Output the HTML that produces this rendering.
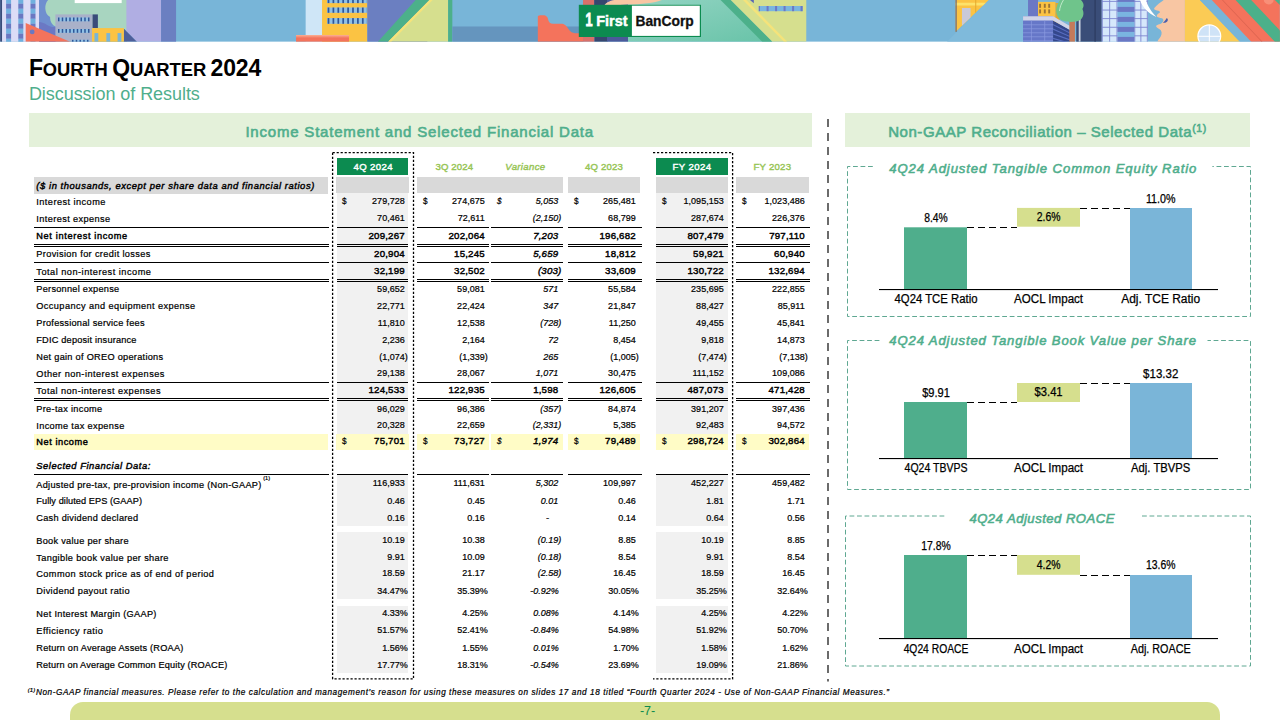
<!DOCTYPE html>
<html lang="en"><head><meta charset="utf-8"><title>Fourth Quarter 2024 - Discussion of Results</title>
<style>
*{margin:0;padding:0;box-sizing:border-box}
html,body{width:1280px;height:720px;overflow:hidden;background:#fff}
body{position:relative;font-family:"Liberation Sans", "DejaVu Sans", sans-serif;color:#000}
.abs{position:absolute}
.t{position:absolute;white-space:nowrap;line-height:14px;height:14px;font-size:9.2px;-webkit-text-stroke:0.22px currentColor}
.r{text-align:right}
.c{text-align:center}
.b{font-weight:bold}
.t.b{font-weight:normal;-webkit-text-stroke:0.42px currentColor}
.hb{font-weight:normal;-webkit-text-stroke:0.6px currentColor}
.i{font-style:italic}
.ln{position:absolute;background:#000}
.g1{position:absolute;background:#d9d9d9}
.g2{position:absolute;background:#f1f1f1}
.yl{position:absolute;background:#fffcc6}
</style></head>
<body>
<div id="f1" class="abs b" style="left:28.9px;top:53px;height:30px;line-height:30px;white-space:nowrap;letter-spacing:-0.086px"><span style="font-size:23px">F</span><span style="font-size:18.4px">OURTH</span> <span style="font-size:23px">Q</span><span style="font-size:18.4px">UARTER</span> <span style="font-size:23px">2024</span></div>
<div id="f2" class="abs" style="left:28.9px;top:81.7px;height:24px;line-height:24px;font-size:18px;color:#4fae8c;white-space:nowrap;letter-spacing:-0.054px">Discussion of Results</div>
<div class="abs" style="left:29px;top:113px;width:783px;height:33.7px;background:#e4f1da"></div>
<div id="f3" class="abs hb" style="left:245.4px;top:113px;height:33.7px;line-height:37.9px;font-size:15px;color:#4fae8c;white-space:nowrap;letter-spacing:0.797px">Income Statement and Selected Financial Data</div>
<div class="abs" style="left:844.5px;top:113px;width:405.5px;height:33.7px;background:#e4f1da"></div>
<div id="f4" class="abs hb" style="left:888.2px;top:113px;height:33.7px;line-height:37.9px;font-size:15px;color:#4fae8c;white-space:nowrap;letter-spacing:0.555px">Non-GAAP Reconciliation &ndash; Selected Data<span style="font-size:10.5px;position:relative;top:-5px">(1)</span></div>
<div class="abs" style="left:337px;top:158.2px;width:71px;height:16.4px;background:#0c8b50"></div>
<div id="f5" class="t b" style="left:353.5px;top:160.0px;color:#fff;font-size:9.6px;letter-spacing:0.365px">4Q 2024</div>
<div id="f6" class="t b" style="left:435.4px;top:160.0px;color:#97c556;font-size:9.6px;letter-spacing:0.165px">3Q 2024</div>
<div id="f7" class="t b i" style="left:505.3px;top:160.0px;color:#97c556;font-size:9.6px;letter-spacing:0.326px">Variance</div>
<div id="f8" class="t b" style="left:585.1px;top:160.0px;color:#97c556;font-size:9.6px;letter-spacing:0.165px">4Q 2023</div>
<div class="abs" style="left:656px;top:158.2px;width:72px;height:16.4px;background:#0c8b50"></div>
<div id="f9" class="t b" style="left:672.6px;top:160.0px;color:#fff;font-size:9.6px;letter-spacing:0.384px">FY 2024</div>
<div id="f10" class="t b" style="left:753.5px;top:160.0px;color:#97c556;font-size:9.6px;letter-spacing:0.234px">FY 2023</div>
<div class="g1" style="left:34.4px;top:177.1px;width:293.6px;height:16.65px"></div>
<div class="g1" style="left:336px;top:177.1px;width:73px;height:15.5px"></div>
<div class="g1" style="left:417px;top:177.1px;width:145.5px;height:15.5px"></div>
<div class="g1" style="left:568px;top:177.1px;width:72px;height:15.5px"></div>
<div class="g1" style="left:656px;top:177.1px;width:72px;height:15.5px"></div>
<div class="g1" style="left:736px;top:177.1px;width:73px;height:15.5px"></div>
<div id="f11" class="t b i" style="left:36.3px;top:178.8px;font-size:9.4px;letter-spacing:0.578px">($ in thousands, except per share data and financial ratios)</div>
<div class="g2" style="left:337px;top:192.6px;width:71px;height:241.4px"></div>
<div class="g2" style="left:337px;top:474.7px;width:71px;height:51.00000000000006px"></div>
<div class="g2" style="left:337px;top:532px;width:71px;height:66.79999999999995px"></div>
<div class="g2" style="left:337px;top:606px;width:71px;height:66.79999999999995px"></div>
<div class="g2" style="left:656px;top:192.6px;width:72px;height:241.4px"></div>
<div class="g2" style="left:656px;top:474.7px;width:72px;height:51.00000000000006px"></div>
<div class="g2" style="left:656px;top:532px;width:72px;height:66.79999999999995px"></div>
<div class="g2" style="left:656px;top:606px;width:72px;height:66.79999999999995px"></div>
<div class="yl" style="left:34.4px;top:434.2px;width:293.6px;height:15.600000000000023px"></div>
<div class="yl" style="left:336px;top:434.2px;width:73px;height:15.600000000000023px"></div>
<div class="yl" style="left:417px;top:434.2px;width:72px;height:15.600000000000023px"></div>
<div class="yl" style="left:491px;top:434.2px;width:71.5px;height:15.600000000000023px"></div>
<div class="yl" style="left:568px;top:434.2px;width:72px;height:15.600000000000023px"></div>
<div class="yl" style="left:656px;top:434.2px;width:72px;height:15.600000000000023px"></div>
<div class="yl" style="left:736px;top:434.2px;width:73px;height:15.600000000000023px"></div>
<div id="f12" class="t" style="left:36.3px;top:194.7px;letter-spacing:0.449px">Interest income</div>
<div class="t r" style="left:326px;top:194.4px;width:78.70px;font-size:9.7px;transform:scaleX(.93);transform-origin:100% 50%">279,728</div>
<div class="t" style="left:342.3px;top:194.39999999999998px;font-size:9.7px;transform:scaleX(.85);transform-origin:0 50%">$</div>
<div class="t r" style="left:407px;top:194.4px;width:77.70px;font-size:9.7px;transform:scaleX(.93);transform-origin:100% 50%">274,675</div>
<div class="t" style="left:423.3px;top:194.39999999999998px;font-size:9.7px;transform:scaleX(.85);transform-origin:0 50%">$</div>
<div class="t r i" style="left:481px;top:194.4px;width:77.20px;font-size:9.7px;transform:scaleX(.93);transform-origin:100% 50%">5,053</div>
<div class="t i" style="left:497.3px;top:194.39999999999998px;font-size:9.7px;transform:scaleX(.85);transform-origin:0 50%">$</div>
<div class="t r" style="left:558px;top:194.4px;width:77.70px;font-size:9.7px;transform:scaleX(.93);transform-origin:100% 50%">265,481</div>
<div class="t" style="left:574.3px;top:194.39999999999998px;font-size:9.7px;transform:scaleX(.85);transform-origin:0 50%">$</div>
<div class="t r" style="left:646px;top:194.4px;width:77.70px;font-size:9.7px;transform:scaleX(.93);transform-origin:100% 50%">1,095,153</div>
<div class="t" style="left:662.3px;top:194.39999999999998px;font-size:9.7px;transform:scaleX(.85);transform-origin:0 50%">$</div>
<div class="t r" style="left:726px;top:194.4px;width:78.70px;font-size:9.7px;transform:scaleX(.93);transform-origin:100% 50%">1,023,486</div>
<div class="t" style="left:742.3px;top:194.39999999999998px;font-size:9.7px;transform:scaleX(.85);transform-origin:0 50%">$</div>
<div id="f13" class="t" style="left:36.3px;top:211.5px;letter-spacing:0.397px">Interest expense</div>
<div class="t r" style="left:326px;top:211.2px;width:78.70px;font-size:9.7px;transform:scaleX(.93);transform-origin:100% 50%">70,461</div>
<div class="t r" style="left:407px;top:211.2px;width:77.70px;font-size:9.7px;transform:scaleX(.93);transform-origin:100% 50%">72,611</div>
<div class="t r i" style="left:481px;top:211.2px;width:80.30px;font-size:9.7px;transform:scaleX(.93);transform-origin:100% 50%">(2,150)</div>
<div class="t r" style="left:558px;top:211.2px;width:77.70px;font-size:9.7px;transform:scaleX(.93);transform-origin:100% 50%">68,799</div>
<div class="t r" style="left:646px;top:211.2px;width:77.70px;font-size:9.7px;transform:scaleX(.93);transform-origin:100% 50%">287,674</div>
<div class="t r" style="left:726px;top:211.2px;width:78.70px;font-size:9.7px;transform:scaleX(.93);transform-origin:100% 50%">226,376</div>
<div id="f14" class="t b" style="left:36.3px;top:229.4px;letter-spacing:0.652px">Net interest income</div>
<div class="t r b" style="left:326px;top:229.1px;width:78.90px;font-size:9.7px;letter-spacing:0.2px">209,267</div>
<div class="t r b" style="left:407px;top:229.1px;width:77.90px;font-size:9.7px;letter-spacing:0.2px">202,064</div>
<div class="t r b i" style="left:481px;top:229.1px;width:77.40px;font-size:9.7px;letter-spacing:0.2px">7,203</div>
<div class="t r b" style="left:558px;top:229.1px;width:77.90px;font-size:9.7px;letter-spacing:0.2px">196,682</div>
<div class="t r b" style="left:646px;top:229.1px;width:77.90px;font-size:9.7px;letter-spacing:0.2px">807,479</div>
<div class="t r b" style="left:726px;top:229.1px;width:78.90px;font-size:9.7px;letter-spacing:0.2px">797,110</div>
<div id="f15" class="t" style="left:36.3px;top:246.8px;letter-spacing:0.358px">Provision for credit losses</div>
<div class="t r b" style="left:326px;top:246.5px;width:78.90px;font-size:9.7px;letter-spacing:0.2px">20,904</div>
<div class="t r b" style="left:407px;top:246.5px;width:77.90px;font-size:9.7px;letter-spacing:0.2px">15,245</div>
<div class="t r b i" style="left:481px;top:246.5px;width:77.40px;font-size:9.7px;letter-spacing:0.2px">5,659</div>
<div class="t r b" style="left:558px;top:246.5px;width:77.90px;font-size:9.7px;letter-spacing:0.2px">18,812</div>
<div class="t r b" style="left:646px;top:246.5px;width:77.90px;font-size:9.7px;letter-spacing:0.2px">59,921</div>
<div class="t r b" style="left:726px;top:246.5px;width:78.90px;font-size:9.7px;letter-spacing:0.2px">60,940</div>
<div id="f16" class="t" style="left:36.3px;top:264.6px;letter-spacing:0.498px">Total non-interest income</div>
<div class="t r b" style="left:326px;top:264.3px;width:78.90px;font-size:9.7px;letter-spacing:0.2px">32,199</div>
<div class="t r b" style="left:407px;top:264.3px;width:77.90px;font-size:9.7px;letter-spacing:0.2px">32,502</div>
<div class="t r b i" style="left:481px;top:264.3px;width:80.50px;font-size:9.7px;letter-spacing:0.2px">(303)</div>
<div class="t r b" style="left:558px;top:264.3px;width:77.90px;font-size:9.7px;letter-spacing:0.2px">33,609</div>
<div class="t r b" style="left:646px;top:264.3px;width:77.90px;font-size:9.7px;letter-spacing:0.2px">130,722</div>
<div class="t r b" style="left:726px;top:264.3px;width:78.90px;font-size:9.7px;letter-spacing:0.2px">132,694</div>
<div id="f17" class="t" style="left:36.3px;top:282.3px;letter-spacing:0.264px">Personnel expense</div>
<div class="t r" style="left:326px;top:282.0px;width:78.70px;font-size:9.7px;transform:scaleX(.93);transform-origin:100% 50%">59,652</div>
<div class="t r" style="left:407px;top:282.0px;width:77.70px;font-size:9.7px;transform:scaleX(.93);transform-origin:100% 50%">59,081</div>
<div class="t r i" style="left:481px;top:282.0px;width:77.20px;font-size:9.7px;transform:scaleX(.93);transform-origin:100% 50%">571</div>
<div class="t r" style="left:558px;top:282.0px;width:77.70px;font-size:9.7px;transform:scaleX(.93);transform-origin:100% 50%">55,584</div>
<div class="t r" style="left:646px;top:282.0px;width:77.70px;font-size:9.7px;transform:scaleX(.93);transform-origin:100% 50%">235,695</div>
<div class="t r" style="left:726px;top:282.0px;width:78.70px;font-size:9.7px;transform:scaleX(.93);transform-origin:100% 50%">222,855</div>
<div id="f18" class="t" style="left:36.3px;top:298.8px;letter-spacing:0.407px">Occupancy and equipment expense</div>
<div class="t r" style="left:326px;top:298.5px;width:78.70px;font-size:9.7px;transform:scaleX(.93);transform-origin:100% 50%">22,771</div>
<div class="t r" style="left:407px;top:298.5px;width:77.70px;font-size:9.7px;transform:scaleX(.93);transform-origin:100% 50%">22,424</div>
<div class="t r i" style="left:481px;top:298.5px;width:77.20px;font-size:9.7px;transform:scaleX(.93);transform-origin:100% 50%">347</div>
<div class="t r" style="left:558px;top:298.5px;width:77.70px;font-size:9.7px;transform:scaleX(.93);transform-origin:100% 50%">21,847</div>
<div class="t r" style="left:646px;top:298.5px;width:77.70px;font-size:9.7px;transform:scaleX(.93);transform-origin:100% 50%">88,427</div>
<div class="t r" style="left:726px;top:298.5px;width:78.70px;font-size:9.7px;transform:scaleX(.93);transform-origin:100% 50%">85,911</div>
<div id="f19" class="t" style="left:36.3px;top:316.0px;letter-spacing:0.252px">Professional service fees</div>
<div class="t r" style="left:326px;top:315.7px;width:78.70px;font-size:9.7px;transform:scaleX(.93);transform-origin:100% 50%">11,810</div>
<div class="t r" style="left:407px;top:315.7px;width:77.70px;font-size:9.7px;transform:scaleX(.93);transform-origin:100% 50%">12,538</div>
<div class="t r i" style="left:481px;top:315.7px;width:80.30px;font-size:9.7px;transform:scaleX(.93);transform-origin:100% 50%">(728)</div>
<div class="t r" style="left:558px;top:315.7px;width:77.70px;font-size:9.7px;transform:scaleX(.93);transform-origin:100% 50%">11,250</div>
<div class="t r" style="left:646px;top:315.7px;width:77.70px;font-size:9.7px;transform:scaleX(.93);transform-origin:100% 50%">49,455</div>
<div class="t r" style="left:726px;top:315.7px;width:78.70px;font-size:9.7px;transform:scaleX(.93);transform-origin:100% 50%">45,841</div>
<div id="f20" class="t" style="left:36.3px;top:332.8px;letter-spacing:0.199px">FDIC deposit insurance</div>
<div class="t r" style="left:326px;top:332.5px;width:78.70px;font-size:9.7px;transform:scaleX(.93);transform-origin:100% 50%">2,236</div>
<div class="t r" style="left:407px;top:332.5px;width:77.70px;font-size:9.7px;transform:scaleX(.93);transform-origin:100% 50%">2,164</div>
<div class="t r i" style="left:481px;top:332.5px;width:77.20px;font-size:9.7px;transform:scaleX(.93);transform-origin:100% 50%">72</div>
<div class="t r" style="left:558px;top:332.5px;width:77.70px;font-size:9.7px;transform:scaleX(.93);transform-origin:100% 50%">8,454</div>
<div class="t r" style="left:646px;top:332.5px;width:77.70px;font-size:9.7px;transform:scaleX(.93);transform-origin:100% 50%">9,818</div>
<div class="t r" style="left:726px;top:332.5px;width:78.70px;font-size:9.7px;transform:scaleX(.93);transform-origin:100% 50%">14,873</div>
<div id="f21" class="t" style="left:36.3px;top:350.0px;letter-spacing:0.280px">Net gain of OREO operations</div>
<div class="t r" style="left:326px;top:349.7px;width:81.80px;font-size:9.7px;transform:scaleX(.93);transform-origin:100% 50%">(1,074)</div>
<div class="t r" style="left:407px;top:349.7px;width:80.80px;font-size:9.7px;transform:scaleX(.93);transform-origin:100% 50%">(1,339)</div>
<div class="t r i" style="left:481px;top:349.7px;width:77.20px;font-size:9.7px;transform:scaleX(.93);transform-origin:100% 50%">265</div>
<div class="t r" style="left:558px;top:349.7px;width:80.80px;font-size:9.7px;transform:scaleX(.93);transform-origin:100% 50%">(1,005)</div>
<div class="t r" style="left:646px;top:349.7px;width:80.80px;font-size:9.7px;transform:scaleX(.93);transform-origin:100% 50%">(7,474)</div>
<div class="t r" style="left:726px;top:349.7px;width:81.80px;font-size:9.7px;transform:scaleX(.93);transform-origin:100% 50%">(7,138)</div>
<div id="f22" class="t" style="left:36.3px;top:366.7px;letter-spacing:0.468px">Other non-interest expenses</div>
<div class="t r" style="left:326px;top:366.4px;width:78.70px;font-size:9.7px;transform:scaleX(.93);transform-origin:100% 50%">29,138</div>
<div class="t r" style="left:407px;top:366.4px;width:77.70px;font-size:9.7px;transform:scaleX(.93);transform-origin:100% 50%">28,067</div>
<div class="t r i" style="left:481px;top:366.4px;width:77.20px;font-size:9.7px;transform:scaleX(.93);transform-origin:100% 50%">1,071</div>
<div class="t r" style="left:558px;top:366.4px;width:77.70px;font-size:9.7px;transform:scaleX(.93);transform-origin:100% 50%">30,475</div>
<div class="t r" style="left:646px;top:366.4px;width:77.70px;font-size:9.7px;transform:scaleX(.93);transform-origin:100% 50%">111,152</div>
<div class="t r" style="left:726px;top:366.4px;width:78.70px;font-size:9.7px;transform:scaleX(.93);transform-origin:100% 50%">109,086</div>
<div id="f23" class="t" style="left:36.3px;top:383.7px;letter-spacing:0.455px">Total non-interest expenses</div>
<div class="t r b" style="left:326px;top:383.4px;width:78.90px;font-size:9.7px;letter-spacing:0.2px">124,533</div>
<div class="t r b" style="left:407px;top:383.4px;width:77.90px;font-size:9.7px;letter-spacing:0.2px">122,935</div>
<div class="t r b" style="left:481px;top:383.4px;width:77.40px;font-size:9.7px;letter-spacing:0.2px">1,598</div>
<div class="t r b" style="left:558px;top:383.4px;width:77.90px;font-size:9.7px;letter-spacing:0.2px">126,605</div>
<div class="t r b" style="left:646px;top:383.4px;width:77.90px;font-size:9.7px;letter-spacing:0.2px">487,073</div>
<div class="t r b" style="left:726px;top:383.4px;width:78.90px;font-size:9.7px;letter-spacing:0.2px">471,428</div>
<div id="f24" class="t" style="left:36.3px;top:401.8px;letter-spacing:0.316px">Pre-tax income</div>
<div class="t r" style="left:326px;top:401.5px;width:78.70px;font-size:9.7px;transform:scaleX(.93);transform-origin:100% 50%">96,029</div>
<div class="t r" style="left:407px;top:401.5px;width:77.70px;font-size:9.7px;transform:scaleX(.93);transform-origin:100% 50%">96,386</div>
<div class="t r i" style="left:481px;top:401.5px;width:80.30px;font-size:9.7px;transform:scaleX(.93);transform-origin:100% 50%">(357)</div>
<div class="t r" style="left:558px;top:401.5px;width:77.70px;font-size:9.7px;transform:scaleX(.93);transform-origin:100% 50%">84,874</div>
<div class="t r" style="left:646px;top:401.5px;width:77.70px;font-size:9.7px;transform:scaleX(.93);transform-origin:100% 50%">391,207</div>
<div class="t r" style="left:726px;top:401.5px;width:78.70px;font-size:9.7px;transform:scaleX(.93);transform-origin:100% 50%">397,436</div>
<div id="f25" class="t" style="left:36.3px;top:418.6px;letter-spacing:0.339px">Income tax expense</div>
<div class="t r" style="left:326px;top:418.3px;width:78.70px;font-size:9.7px;transform:scaleX(.93);transform-origin:100% 50%">20,328</div>
<div class="t r" style="left:407px;top:418.3px;width:77.70px;font-size:9.7px;transform:scaleX(.93);transform-origin:100% 50%">22,659</div>
<div class="t r i" style="left:481px;top:418.3px;width:80.30px;font-size:9.7px;transform:scaleX(.93);transform-origin:100% 50%">(2,331)</div>
<div class="t r" style="left:558px;top:418.3px;width:77.70px;font-size:9.7px;transform:scaleX(.93);transform-origin:100% 50%">5,385</div>
<div class="t r" style="left:646px;top:418.3px;width:77.70px;font-size:9.7px;transform:scaleX(.93);transform-origin:100% 50%">92,483</div>
<div class="t r" style="left:726px;top:418.3px;width:78.70px;font-size:9.7px;transform:scaleX(.93);transform-origin:100% 50%">94,572</div>
<div id="f26" class="t b" style="left:36.3px;top:434.7px;letter-spacing:0.559px">Net income</div>
<div class="t r b" style="left:326px;top:434.4px;width:78.90px;font-size:9.7px;letter-spacing:0.2px">75,701</div>
<div class="t" style="left:342.3px;top:434.4px;font-size:9.7px;transform:scaleX(.85);transform-origin:0 50%">$</div>
<div class="t r b" style="left:407px;top:434.4px;width:77.90px;font-size:9.7px;letter-spacing:0.2px">73,727</div>
<div class="t" style="left:423.3px;top:434.4px;font-size:9.7px;transform:scaleX(.85);transform-origin:0 50%">$</div>
<div class="t r b i" style="left:481px;top:434.4px;width:77.40px;font-size:9.7px;letter-spacing:0.2px">1,974</div>
<div class="t i" style="left:497.3px;top:434.4px;font-size:9.7px;transform:scaleX(.85);transform-origin:0 50%">$</div>
<div class="t r b" style="left:558px;top:434.4px;width:77.90px;font-size:9.7px;letter-spacing:0.2px">79,489</div>
<div class="t" style="left:574.3px;top:434.4px;font-size:9.7px;transform:scaleX(.85);transform-origin:0 50%">$</div>
<div class="t r b" style="left:646px;top:434.4px;width:77.90px;font-size:9.7px;letter-spacing:0.2px">298,724</div>
<div class="t" style="left:662.3px;top:434.4px;font-size:9.7px;transform:scaleX(.85);transform-origin:0 50%">$</div>
<div class="t r b" style="left:726px;top:434.4px;width:78.90px;font-size:9.7px;letter-spacing:0.2px">302,864</div>
<div class="t" style="left:742.3px;top:434.4px;font-size:9.7px;transform:scaleX(.85);transform-origin:0 50%">$</div>
<div id="f27" class="t" style="left:36.3px;top:478.4px;letter-spacing:0.283px">Adjusted pre-tax, pre-provision income (Non-GAAP)<span style="font-size:5.6px;position:relative;top:-8.6px;left:1.6px;letter-spacing:0">(1)</span></div>
<div class="t r" style="left:326px;top:475.6px;width:78.70px;font-size:9.7px;transform:scaleX(.93);transform-origin:100% 50%">116,933</div>
<div class="t r" style="left:407px;top:475.6px;width:77.70px;font-size:9.7px;transform:scaleX(.93);transform-origin:100% 50%">111,631</div>
<div class="t r i" style="left:481px;top:475.6px;width:77.20px;font-size:9.7px;transform:scaleX(.93);transform-origin:100% 50%">5,302</div>
<div class="t r" style="left:558px;top:475.6px;width:77.70px;font-size:9.7px;transform:scaleX(.93);transform-origin:100% 50%">109,997</div>
<div class="t r" style="left:646px;top:475.6px;width:77.70px;font-size:9.7px;transform:scaleX(.93);transform-origin:100% 50%">452,227</div>
<div class="t r" style="left:726px;top:475.6px;width:78.70px;font-size:9.7px;transform:scaleX(.93);transform-origin:100% 50%">459,482</div>
<div id="f28" class="t" style="left:36.3px;top:493.8px;letter-spacing:0.066px">Fully diluted EPS (GAAP)</div>
<div class="t r" style="left:326px;top:493.5px;width:78.70px;font-size:9.7px;transform:scaleX(.93);transform-origin:100% 50%">0.46</div>
<div class="t r" style="left:407px;top:493.5px;width:77.70px;font-size:9.7px;transform:scaleX(.93);transform-origin:100% 50%">0.45</div>
<div class="t r i" style="left:481px;top:493.5px;width:77.20px;font-size:9.7px;transform:scaleX(.93);transform-origin:100% 50%">0.01</div>
<div class="t r" style="left:558px;top:493.5px;width:77.70px;font-size:9.7px;transform:scaleX(.93);transform-origin:100% 50%">0.46</div>
<div class="t r" style="left:646px;top:493.5px;width:77.70px;font-size:9.7px;transform:scaleX(.93);transform-origin:100% 50%">1.81</div>
<div class="t r" style="left:726px;top:493.5px;width:78.70px;font-size:9.7px;transform:scaleX(.93);transform-origin:100% 50%">1.71</div>
<div id="f29" class="t" style="left:36.3px;top:510.9px;letter-spacing:0.275px">Cash dividend declared</div>
<div class="t r" style="left:326px;top:510.6px;width:78.70px;font-size:9.7px;transform:scaleX(.93);transform-origin:100% 50%">0.16</div>
<div class="t r" style="left:407px;top:510.6px;width:77.70px;font-size:9.7px;transform:scaleX(.93);transform-origin:100% 50%">0.16</div>
<div class="t r i" style="left:481px;top:510.6px;width:68.00px;font-size:9.7px;transform:scaleX(.93);transform-origin:100% 50%">-</div>
<div class="t r" style="left:558px;top:510.6px;width:77.70px;font-size:9.7px;transform:scaleX(.93);transform-origin:100% 50%">0.14</div>
<div class="t r" style="left:646px;top:510.6px;width:77.70px;font-size:9.7px;transform:scaleX(.93);transform-origin:100% 50%">0.64</div>
<div class="t r" style="left:726px;top:510.6px;width:78.70px;font-size:9.7px;transform:scaleX(.93);transform-origin:100% 50%">0.56</div>
<div id="f30" class="t" style="left:36.3px;top:533.5px;letter-spacing:0.283px">Book value per share</div>
<div class="t r" style="left:326px;top:533.2px;width:78.70px;font-size:9.7px;transform:scaleX(.93);transform-origin:100% 50%">10.19</div>
<div class="t r" style="left:407px;top:533.2px;width:77.70px;font-size:9.7px;transform:scaleX(.93);transform-origin:100% 50%">10.38</div>
<div class="t r i" style="left:481px;top:533.2px;width:80.30px;font-size:9.7px;transform:scaleX(.93);transform-origin:100% 50%">(0.19)</div>
<div class="t r" style="left:558px;top:533.2px;width:77.70px;font-size:9.7px;transform:scaleX(.93);transform-origin:100% 50%">8.85</div>
<div class="t r" style="left:646px;top:533.2px;width:77.70px;font-size:9.7px;transform:scaleX(.93);transform-origin:100% 50%">10.19</div>
<div class="t r" style="left:726px;top:533.2px;width:78.70px;font-size:9.7px;transform:scaleX(.93);transform-origin:100% 50%">8.85</div>
<div id="f31" class="t" style="left:36.3px;top:550.5px;letter-spacing:0.343px">Tangible book value per share</div>
<div class="t r" style="left:326px;top:550.2px;width:78.70px;font-size:9.7px;transform:scaleX(.93);transform-origin:100% 50%">9.91</div>
<div class="t r" style="left:407px;top:550.2px;width:77.70px;font-size:9.7px;transform:scaleX(.93);transform-origin:100% 50%">10.09</div>
<div class="t r i" style="left:481px;top:550.2px;width:80.30px;font-size:9.7px;transform:scaleX(.93);transform-origin:100% 50%">(0.18)</div>
<div class="t r" style="left:558px;top:550.2px;width:77.70px;font-size:9.7px;transform:scaleX(.93);transform-origin:100% 50%">8.54</div>
<div class="t r" style="left:646px;top:550.2px;width:77.70px;font-size:9.7px;transform:scaleX(.93);transform-origin:100% 50%">9.91</div>
<div class="t r" style="left:726px;top:550.2px;width:78.70px;font-size:9.7px;transform:scaleX(.93);transform-origin:100% 50%">8.54</div>
<div id="f32" class="t" style="left:36.3px;top:566.6px;letter-spacing:0.413px">Common stock price as of end of period</div>
<div class="t r" style="left:326px;top:566.3px;width:78.70px;font-size:9.7px;transform:scaleX(.93);transform-origin:100% 50%">18.59</div>
<div class="t r" style="left:407px;top:566.3px;width:77.70px;font-size:9.7px;transform:scaleX(.93);transform-origin:100% 50%">21.17</div>
<div class="t r i" style="left:481px;top:566.3px;width:80.30px;font-size:9.7px;transform:scaleX(.93);transform-origin:100% 50%">(2.58)</div>
<div class="t r" style="left:558px;top:566.3px;width:77.70px;font-size:9.7px;transform:scaleX(.93);transform-origin:100% 50%">16.45</div>
<div class="t r" style="left:646px;top:566.3px;width:77.70px;font-size:9.7px;transform:scaleX(.93);transform-origin:100% 50%">18.59</div>
<div class="t r" style="left:726px;top:566.3px;width:78.70px;font-size:9.7px;transform:scaleX(.93);transform-origin:100% 50%">16.45</div>
<div id="f33" class="t" style="left:36.3px;top:584.0px;letter-spacing:0.344px">Dividend payout ratio</div>
<div class="t r" style="left:326px;top:583.7px;width:81.80px;font-size:9.7px;transform:scaleX(.93);transform-origin:100% 50%">34.47%</div>
<div class="t r" style="left:407px;top:583.7px;width:80.80px;font-size:9.7px;transform:scaleX(.93);transform-origin:100% 50%">35.39%</div>
<div class="t r i" style="left:481px;top:583.7px;width:77.70px;font-size:9.7px;transform:scaleX(.93);transform-origin:100% 50%">-0.92%</div>
<div class="t r" style="left:558px;top:583.7px;width:80.80px;font-size:9.7px;transform:scaleX(.93);transform-origin:100% 50%">30.05%</div>
<div class="t r" style="left:646px;top:583.7px;width:80.80px;font-size:9.7px;transform:scaleX(.93);transform-origin:100% 50%">35.25%</div>
<div class="t r" style="left:726px;top:583.7px;width:81.80px;font-size:9.7px;transform:scaleX(.93);transform-origin:100% 50%">32.64%</div>
<div id="f34" class="t" style="left:36.3px;top:606.6px;letter-spacing:0.311px">Net Interest Margin (GAAP)</div>
<div class="t r" style="left:326px;top:606.3px;width:81.80px;font-size:9.7px;transform:scaleX(.93);transform-origin:100% 50%">4.33%</div>
<div class="t r" style="left:407px;top:606.3px;width:80.80px;font-size:9.7px;transform:scaleX(.93);transform-origin:100% 50%">4.25%</div>
<div class="t r i" style="left:481px;top:606.3px;width:77.70px;font-size:9.7px;transform:scaleX(.93);transform-origin:100% 50%">0.08%</div>
<div class="t r" style="left:558px;top:606.3px;width:80.80px;font-size:9.7px;transform:scaleX(.93);transform-origin:100% 50%">4.14%</div>
<div class="t r" style="left:646px;top:606.3px;width:80.80px;font-size:9.7px;transform:scaleX(.93);transform-origin:100% 50%">4.25%</div>
<div class="t r" style="left:726px;top:606.3px;width:81.80px;font-size:9.7px;transform:scaleX(.93);transform-origin:100% 50%">4.22%</div>
<div id="f35" class="t" style="left:36.3px;top:623.7px;letter-spacing:0.468px">Efficiency ratio</div>
<div class="t r" style="left:326px;top:623.4px;width:81.80px;font-size:9.7px;transform:scaleX(.93);transform-origin:100% 50%">51.57%</div>
<div class="t r" style="left:407px;top:623.4px;width:80.80px;font-size:9.7px;transform:scaleX(.93);transform-origin:100% 50%">52.41%</div>
<div class="t r i" style="left:481px;top:623.4px;width:77.70px;font-size:9.7px;transform:scaleX(.93);transform-origin:100% 50%">-0.84%</div>
<div class="t r" style="left:558px;top:623.4px;width:80.80px;font-size:9.7px;transform:scaleX(.93);transform-origin:100% 50%">54.98%</div>
<div class="t r" style="left:646px;top:623.4px;width:80.80px;font-size:9.7px;transform:scaleX(.93);transform-origin:100% 50%">51.92%</div>
<div class="t r" style="left:726px;top:623.4px;width:81.80px;font-size:9.7px;transform:scaleX(.93);transform-origin:100% 50%">50.70%</div>
<div id="f36" class="t" style="left:36.3px;top:640.9px;letter-spacing:0.207px">Return on Average Assets (ROAA)</div>
<div class="t r" style="left:326px;top:640.6px;width:81.80px;font-size:9.7px;transform:scaleX(.93);transform-origin:100% 50%">1.56%</div>
<div class="t r" style="left:407px;top:640.6px;width:80.80px;font-size:9.7px;transform:scaleX(.93);transform-origin:100% 50%">1.55%</div>
<div class="t r i" style="left:481px;top:640.6px;width:77.70px;font-size:9.7px;transform:scaleX(.93);transform-origin:100% 50%">0.01%</div>
<div class="t r" style="left:558px;top:640.6px;width:80.80px;font-size:9.7px;transform:scaleX(.93);transform-origin:100% 50%">1.70%</div>
<div class="t r" style="left:646px;top:640.6px;width:80.80px;font-size:9.7px;transform:scaleX(.93);transform-origin:100% 50%">1.58%</div>
<div class="t r" style="left:726px;top:640.6px;width:81.80px;font-size:9.7px;transform:scaleX(.93);transform-origin:100% 50%">1.62%</div>
<div id="f37" class="t" style="left:36.3px;top:658.0px;letter-spacing:0.137px">Return on Average Common Equity (ROACE)</div>
<div class="t r" style="left:326px;top:657.7px;width:81.80px;font-size:9.7px;transform:scaleX(.93);transform-origin:100% 50%">17.77%</div>
<div class="t r" style="left:407px;top:657.7px;width:80.80px;font-size:9.7px;transform:scaleX(.93);transform-origin:100% 50%">18.31%</div>
<div class="t r i" style="left:481px;top:657.7px;width:77.70px;font-size:9.7px;transform:scaleX(.93);transform-origin:100% 50%">-0.54%</div>
<div class="t r" style="left:558px;top:657.7px;width:80.80px;font-size:9.7px;transform:scaleX(.93);transform-origin:100% 50%">23.69%</div>
<div class="t r" style="left:646px;top:657.7px;width:80.80px;font-size:9.7px;transform:scaleX(.93);transform-origin:100% 50%">19.09%</div>
<div class="t r" style="left:726px;top:657.7px;width:81.80px;font-size:9.7px;transform:scaleX(.93);transform-origin:100% 50%">21.86%</div>
<div id="f38" class="t b i" style="left:36.3px;top:459.3px;font-size:9.4px;letter-spacing:0.538px">Selected Financial Data:</div>
<div class="ln" style="left:34.4px;top:227px;width:294.8px;height:1.15px"></div>
<div class="ln" style="left:337px;top:227px;width:71px;height:1.15px"></div>
<div class="ln" style="left:417px;top:227px;width:72px;height:1.15px"></div>
<div class="ln" style="left:491px;top:227px;width:71.5px;height:1.15px"></div>
<div class="ln" style="left:568px;top:227px;width:73.5px;height:1.15px"></div>
<div class="ln" style="left:656px;top:227px;width:72px;height:1.15px"></div>
<div class="ln" style="left:736px;top:227px;width:73.5px;height:1.15px"></div>
<div class="ln" style="left:34.4px;top:262px;width:294.8px;height:1.15px"></div>
<div class="ln" style="left:337px;top:262px;width:71px;height:1.15px"></div>
<div class="ln" style="left:417px;top:262px;width:72px;height:1.15px"></div>
<div class="ln" style="left:491px;top:262px;width:71.5px;height:1.15px"></div>
<div class="ln" style="left:568px;top:262px;width:73.5px;height:1.15px"></div>
<div class="ln" style="left:656px;top:262px;width:72px;height:1.15px"></div>
<div class="ln" style="left:736px;top:262px;width:73.5px;height:1.15px"></div>
<div class="ln" style="left:34.4px;top:382px;width:294.8px;height:1.15px"></div>
<div class="ln" style="left:337px;top:382px;width:71px;height:1.15px"></div>
<div class="ln" style="left:417px;top:382px;width:72px;height:1.15px"></div>
<div class="ln" style="left:491px;top:382px;width:71.5px;height:1.15px"></div>
<div class="ln" style="left:568px;top:382px;width:73.5px;height:1.15px"></div>
<div class="ln" style="left:656px;top:382px;width:72px;height:1.15px"></div>
<div class="ln" style="left:736px;top:382px;width:73.5px;height:1.15px"></div>
<div class="ln" style="left:34.4px;top:474px;width:294.8px;height:1.15px"></div>
<div class="ln" style="left:337px;top:474px;width:71px;height:1.15px"></div>
<div class="ln" style="left:417px;top:474px;width:72px;height:1.15px"></div>
<div class="ln" style="left:491px;top:474px;width:71.5px;height:1.15px"></div>
<div class="ln" style="left:568px;top:474px;width:73.5px;height:1.15px"></div>
<div class="ln" style="left:656px;top:474px;width:72px;height:1.15px"></div>
<div class="ln" style="left:736px;top:474px;width:73.5px;height:1.15px"></div>
<div class="ln" style="left:34.4px;top:244px;width:294.8px;height:1px"></div>
<div class="ln" style="left:337px;top:244px;width:71px;height:1px"></div>
<div class="ln" style="left:417px;top:244px;width:72px;height:1px"></div>
<div class="ln" style="left:491px;top:244px;width:71.5px;height:1px"></div>
<div class="ln" style="left:568px;top:244px;width:73.5px;height:1px"></div>
<div class="ln" style="left:656px;top:244px;width:72px;height:1px"></div>
<div class="ln" style="left:736px;top:244px;width:73.5px;height:1px"></div>
<div class="ln" style="left:34.4px;top:246px;width:294.8px;height:1px"></div>
<div class="ln" style="left:337px;top:246px;width:71px;height:1px"></div>
<div class="ln" style="left:417px;top:246px;width:72px;height:1px"></div>
<div class="ln" style="left:491px;top:246px;width:71.5px;height:1px"></div>
<div class="ln" style="left:568px;top:246px;width:73.5px;height:1px"></div>
<div class="ln" style="left:656px;top:246px;width:72px;height:1px"></div>
<div class="ln" style="left:736px;top:246px;width:73.5px;height:1px"></div>
<div class="ln" style="left:34.4px;top:279px;width:294.8px;height:1px"></div>
<div class="ln" style="left:337px;top:279px;width:71px;height:1px"></div>
<div class="ln" style="left:417px;top:279px;width:72px;height:1px"></div>
<div class="ln" style="left:491px;top:279px;width:71.5px;height:1px"></div>
<div class="ln" style="left:568px;top:279px;width:73.5px;height:1px"></div>
<div class="ln" style="left:656px;top:279px;width:72px;height:1px"></div>
<div class="ln" style="left:736px;top:279px;width:73.5px;height:1px"></div>
<div class="ln" style="left:34.4px;top:281px;width:294.8px;height:1px"></div>
<div class="ln" style="left:337px;top:281px;width:71px;height:1px"></div>
<div class="ln" style="left:417px;top:281px;width:72px;height:1px"></div>
<div class="ln" style="left:491px;top:281px;width:71.5px;height:1px"></div>
<div class="ln" style="left:568px;top:281px;width:73.5px;height:1px"></div>
<div class="ln" style="left:656px;top:281px;width:72px;height:1px"></div>
<div class="ln" style="left:736px;top:281px;width:73.5px;height:1px"></div>
<div class="ln" style="left:34.4px;top:398px;width:294.8px;height:1px"></div>
<div class="ln" style="left:337px;top:398px;width:71px;height:1px"></div>
<div class="ln" style="left:417px;top:398px;width:72px;height:1px"></div>
<div class="ln" style="left:491px;top:398px;width:71.5px;height:1px"></div>
<div class="ln" style="left:568px;top:398px;width:73.5px;height:1px"></div>
<div class="ln" style="left:656px;top:398px;width:72px;height:1px"></div>
<div class="ln" style="left:736px;top:398px;width:73.5px;height:1px"></div>
<div class="ln" style="left:34.4px;top:400px;width:294.8px;height:1px"></div>
<div class="ln" style="left:337px;top:400px;width:71px;height:1px"></div>
<div class="ln" style="left:417px;top:400px;width:72px;height:1px"></div>
<div class="ln" style="left:491px;top:400px;width:71.5px;height:1px"></div>
<div class="ln" style="left:568px;top:400px;width:73.5px;height:1px"></div>
<div class="ln" style="left:656px;top:400px;width:72px;height:1px"></div>
<div class="ln" style="left:736px;top:400px;width:73.5px;height:1px"></div>
<svg class="abs" style="left:0;top:0" width="1280" height="720">
<rect x="332.6" y="152.6" width="80.9" height="526.3" fill="none" stroke="#000" stroke-width="1.3" stroke-dasharray="2.2 1.8"/>
<path d="M653 152.6 L732.6 152.6 L732.6 678.9 L653 678.9" fill="none" stroke="#000" stroke-width="1.3" stroke-dasharray="2.2 1.8"/>
<line x1="828" y1="118.9" x2="828" y2="681.4" stroke="#6b6b6b" stroke-width="2" stroke-dasharray="8 6"/></svg>
<div id="f39" class="t i" style="left:27.8px;top:685.6px;font-size:8.2px;letter-spacing:0.579px"><span style="font-size:6px;position:relative;top:-3px;letter-spacing:0;margin-right:0.8px">(1)</span>Non-GAAP financial measures. Please refer to the calculation and management&rsquo;s reason for using these measures on slides 17 and 18 titled &ldquo;Fourth Quarter 2024 - Use of Non-GAAP Financial Measures.&rdquo;</div>
<div class="abs" style="left:70.3px;top:702.2px;width:1149.7px;height:30px;background:#d6df8e;border-radius:13px 13px 0 0"></div>
<div class="abs c" style="left:600px;top:703px;width:94px;height:16px;line-height:16px;font-size:12.6px;color:#0c8b50;left:600.6px;top:703.4px">-7-</div>
<svg class="abs" style="left:0;top:0" width="1280" height="720" font-family="Liberation Sans, DejaVu Sans, sans-serif">
<path d="M872.8 166.5 L847.5 166.5 L847.5 316.5 L1250.5 316.5 L1250.5 166.5 L1212.4 166.5" fill="none" stroke="#5fa892" stroke-width="1" stroke-dasharray="4.8 2.7"/>
<text x="1042.8" y="172.8" text-anchor="middle" font-size="13.1" textLength="307.0" lengthAdjust="spacing" font-style="italic" stroke="#4fae8c" stroke-width="0.55" fill="#4fae8c">4Q24 Adjusted Tangible Common Equity Ratio</text>
<rect x="904" y="227.3" width="63" height="61.69999999999999" fill="#4fae8c"/>
<rect x="1017" y="207.9" width="63" height="18.799999999999983" fill="#d6df8e"/>
<rect x="1130" y="208" width="62" height="81" fill="#7ab5d8"/>
<line x1="967" y1="227.5" x2="1017" y2="227.5" stroke="#000" stroke-width="1" stroke-dasharray="7 4"/>
<line x1="1080" y1="208.5" x2="1130" y2="208.5" stroke="#000" stroke-width="1" stroke-dasharray="7 4"/>
<rect x="879" y="289" width="339" height="1.1" fill="#000"/>
<text x="936" y="303.09999999999997" text-anchor="middle" font-size="12.3" textLength="83" lengthAdjust="spacingAndGlyphs" fill="#000" stroke="#000" stroke-width="0.25">4Q24 TCE Ratio</text>
<text x="1048.6" y="303.09999999999997" text-anchor="middle" font-size="12.3" textLength="69" lengthAdjust="spacingAndGlyphs" fill="#000" stroke="#000" stroke-width="0.25">AOCL Impact</text>
<text x="1160.7" y="303.09999999999997" text-anchor="middle" font-size="12.3" textLength="79" lengthAdjust="spacingAndGlyphs" fill="#000" stroke="#000" stroke-width="0.25">Adj. TCE Ratio</text>
<text x="936" y="222.20000000000002" text-anchor="middle" font-size="12.1" textLength="23.5" lengthAdjust="spacingAndGlyphs" fill="#000" stroke="#000" stroke-width="0.25">8.4%</text>
<text x="1048.6" y="221.10000000000002" text-anchor="middle" font-size="12.1" textLength="23.7" lengthAdjust="spacingAndGlyphs" fill="#000" stroke="#000" stroke-width="0.25">2.6%</text>
<text x="1160.7" y="203.20000000000002" text-anchor="middle" font-size="12.1" textLength="29.5" lengthAdjust="spacingAndGlyphs" fill="#000" stroke="#000" stroke-width="0.25">11.0%</text>
<path d="M879.4 340.5 L847.5 340.5 L847.5 489.5 L1250.5 489.5 L1250.5 340.5 L1207.5 340.5" fill="none" stroke="#5fa892" stroke-width="1" stroke-dasharray="4.8 2.7"/>
<text x="1042.65" y="344.9" text-anchor="middle" font-size="13.1" textLength="306.70000000000005" lengthAdjust="spacing" font-style="italic" stroke="#4fae8c" stroke-width="0.55" fill="#4fae8c">4Q24 Adjusted Tangible Book Value per Share</text>
<rect x="904" y="402.0" width="63" height="56.0" fill="#4fae8c"/>
<rect x="1017" y="383" width="63" height="19.0" fill="#d6df8e"/>
<rect x="1130" y="383" width="62" height="75" fill="#7ab5d8"/>
<line x1="967" y1="402.5" x2="1017" y2="402.5" stroke="#000" stroke-width="1" stroke-dasharray="7 4"/>
<line x1="1080" y1="383.5" x2="1130" y2="383.5" stroke="#000" stroke-width="1" stroke-dasharray="7 4"/>
<rect x="879" y="458" width="339" height="1.1" fill="#000"/>
<text x="936" y="472.09999999999997" text-anchor="middle" font-size="12.3" textLength="62.9" lengthAdjust="spacingAndGlyphs" fill="#000" stroke="#000" stroke-width="0.25">4Q24 TBVPS</text>
<text x="1048.6" y="472.09999999999997" text-anchor="middle" font-size="12.3" textLength="69" lengthAdjust="spacingAndGlyphs" fill="#000" stroke="#000" stroke-width="0.25">AOCL Impact</text>
<text x="1160.7" y="472.09999999999997" text-anchor="middle" font-size="12.3" textLength="59.3" lengthAdjust="spacingAndGlyphs" fill="#000" stroke="#000" stroke-width="0.25">Adj. TBVPS</text>
<text x="936" y="397.3" text-anchor="middle" font-size="12.1" textLength="27.7" lengthAdjust="spacingAndGlyphs" fill="#000" stroke="#000" stroke-width="0.25">$9.91</text>
<text x="1048.6" y="395.90000000000003" text-anchor="middle" font-size="12.1" textLength="28" lengthAdjust="spacingAndGlyphs" fill="#000" stroke="#000" stroke-width="0.25">$3.41</text>
<text x="1160.7" y="377.6" text-anchor="middle" font-size="12.1" textLength="35.2" lengthAdjust="spacingAndGlyphs" fill="#000" stroke="#000" stroke-width="0.25">$13.32</text>
<path d="M944.3 516.0 L845.5 516.0 L845.5 666.0 L1250.5 666.0 L1250.5 516.0 L1141.9 516.0" fill="none" stroke="#5fa892" stroke-width="1" stroke-dasharray="4.8 2.7"/>
<text x="1041.9" y="522.5" text-anchor="middle" font-size="13.1" textLength="145.0000000000001" lengthAdjust="spacing" font-style="italic" stroke="#4fae8c" stroke-width="0.55" fill="#4fae8c">4Q24 Adjusted ROACE</text>
<rect x="904" y="555.0" width="63" height="83.0" fill="#4fae8c"/>
<rect x="1017" y="555.0" width="63" height="19.799999999999955" fill="#d6df8e"/>
<rect x="1130" y="575" width="62" height="63" fill="#7ab5d8"/>
<line x1="967" y1="555.5" x2="1017" y2="555.5" stroke="#000" stroke-width="1" stroke-dasharray="7 4"/>
<line x1="1080" y1="575.5" x2="1130" y2="575.5" stroke="#000" stroke-width="1" stroke-dasharray="7 4"/>
<rect x="879" y="638" width="339" height="1.1" fill="#000"/>
<text x="936" y="652.8" text-anchor="middle" font-size="12.3" textLength="64.7" lengthAdjust="spacingAndGlyphs" fill="#000" stroke="#000" stroke-width="0.25">4Q24 ROACE</text>
<text x="1048.6" y="652.8" text-anchor="middle" font-size="12.3" textLength="69" lengthAdjust="spacingAndGlyphs" fill="#000" stroke="#000" stroke-width="0.25">AOCL Impact</text>
<text x="1160.7" y="652.8" text-anchor="middle" font-size="12.3" textLength="60" lengthAdjust="spacingAndGlyphs" fill="#000" stroke="#000" stroke-width="0.25">Adj. ROACE</text>
<text x="936" y="550.3" text-anchor="middle" font-size="12.1" textLength="29.5" lengthAdjust="spacingAndGlyphs" fill="#000" stroke="#000" stroke-width="0.25">17.8%</text>
<text x="1048.6" y="569.3" text-anchor="middle" font-size="12.1" textLength="23.7" lengthAdjust="spacingAndGlyphs" fill="#000" stroke="#000" stroke-width="0.25">4.2%</text>
<text x="1160.7" y="569.3" text-anchor="middle" font-size="12.1" textLength="29.5" lengthAdjust="spacingAndGlyphs" fill="#000" stroke="#000" stroke-width="0.25">13.6%</text>
</svg>
<svg class="abs" id="banner" style="left:0;top:0" width="1280" height="41.85" viewBox="0 0 1280 41.85" font-family="Liberation Sans, DejaVu Sans, sans-serif">
<defs><clipPath id="bc"><rect x="0" y="0" width="1280" height="41.85"/></clipPath>
<linearGradient id="tealg" x1="0" y1="0" x2="1" y2="1"><stop offset="0" stop-color="#93d4c3"/><stop offset="1" stop-color="#68c3a8"/></linearGradient>
<linearGradient id="salm" x1="0" y1="0" x2="0" y2="1"><stop offset="0" stop-color="#fbb094"/><stop offset="0.45" stop-color="#f4735c"/><stop offset="1" stop-color="#f4735c"/></linearGradient>
</defs><g clip-path="url(#bc)">
<rect x="0" y="0" width="1280" height="41.85" fill="#78b5d8"/>
<rect x="0" y="0" width="2" height="41.85" fill="#3a4c7a"/>
<rect x="2" y="0" width="37" height="41.85" fill="#dcdcf6"/>
<rect x="6" y="-1.25" width="5" height="5.1" fill="#6fb0de"/>
<rect x="6" y="3.75" width="5" height="5.1" fill="#6a78c2"/>
<rect x="6" y="8.75" width="5" height="5.1" fill="#6fb0de"/>
<rect x="6" y="13.75" width="5" height="5.1" fill="#6a78c2"/>
<rect x="6" y="18.75" width="5" height="5.1" fill="#6fb0de"/>
<rect x="6" y="23.75" width="5" height="5.1" fill="#6a78c2"/>
<rect x="6" y="28.75" width="5" height="5.1" fill="#6fb0de"/>
<rect x="6" y="33.75" width="5" height="5.1" fill="#6a78c2"/>
<rect x="6" y="38.75" width="5" height="5.1" fill="#6fb0de"/>
<rect x="18.2" y="-1.25" width="5" height="5.1" fill="#6fb0de"/>
<rect x="18.2" y="3.75" width="5" height="5.1" fill="#6a78c2"/>
<rect x="18.2" y="8.75" width="5" height="5.1" fill="#6fb0de"/>
<rect x="18.2" y="13.75" width="5" height="5.1" fill="#6a78c2"/>
<rect x="18.2" y="18.75" width="5" height="5.1" fill="#6fb0de"/>
<rect x="18.2" y="23.75" width="5" height="5.1" fill="#6a78c2"/>
<rect x="18.2" y="28.75" width="5" height="5.1" fill="#6fb0de"/>
<rect x="18.2" y="33.75" width="5" height="5.1" fill="#6a78c2"/>
<rect x="18.2" y="38.75" width="5" height="5.1" fill="#6fb0de"/>
<rect x="30.4" y="-1.25" width="5" height="5.1" fill="#6fb0de"/>
<rect x="30.4" y="3.75" width="5" height="5.1" fill="#6a78c2"/>
<rect x="30.4" y="8.75" width="5" height="5.1" fill="#6fb0de"/>
<rect x="30.4" y="13.75" width="5" height="5.1" fill="#6a78c2"/>
<rect x="30.4" y="18.75" width="5" height="5.1" fill="#6fb0de"/>
<rect x="30.4" y="23.75" width="5" height="5.1" fill="#6a78c2"/>
<rect x="30.4" y="28.75" width="5" height="5.1" fill="#6fb0de"/>
<rect x="30.4" y="33.75" width="5" height="5.1" fill="#6a78c2"/>
<rect x="30.4" y="38.75" width="5" height="5.1" fill="#6fb0de"/>
<rect x="39" y="0" width="88" height="41.85" fill="#6f8fcf"/>
<path d="M48 0 L127 0 L127 41.85 L60 41.85 L60 27 C52 27 50 22 50 17 C44 14 44 4 48 0 Z" fill="#a8d5c0"/>
<rect x="74.6" y="0" width="47" height="3.1" fill="#fff"/>
<path d="M39 22 C44 22 47 26 52 27 L56 27 L56 41.85 L39 41.85 Z" fill="#6b78c4"/>
<rect x="55.3" y="14.4" width="37.2" height="27.450000000000003" fill="#a9b1c9"/>
<rect x="57.5" y="17.5" width="31.900000000000006" height="3.8000000000000007" fill="#8fc1e6"/><rect x="57.90" y="17.5" width="1.50" height="3.8000000000000007" fill="#2f5597"/><rect x="61.65" y="17.5" width="1.50" height="3.8000000000000007" fill="#2f5597"/><rect x="65.40" y="17.5" width="1.50" height="3.8000000000000007" fill="#2f5597"/><rect x="69.15" y="17.5" width="1.50" height="3.8000000000000007" fill="#2f5597"/><rect x="72.90" y="17.5" width="1.50" height="3.8000000000000007" fill="#2f5597"/><rect x="76.65" y="17.5" width="1.50" height="3.8000000000000007" fill="#2f5597"/><rect x="80.40" y="17.5" width="1.50" height="3.8000000000000007" fill="#2f5597"/><rect x="84.15" y="17.5" width="1.50" height="3.8000000000000007" fill="#2f5597"/><rect x="87.90" y="17.5" width="1.50" height="3.8000000000000007" fill="#2f5597"/>
<rect x="57.5" y="29.0" width="31.900000000000006" height="3.799999999999997" fill="#8fc1e6"/><rect x="57.90" y="29.0" width="1.50" height="3.799999999999997" fill="#2f5597"/><rect x="61.65" y="29.0" width="1.50" height="3.799999999999997" fill="#2f5597"/><rect x="65.40" y="29.0" width="1.50" height="3.799999999999997" fill="#2f5597"/><rect x="69.15" y="29.0" width="1.50" height="3.799999999999997" fill="#2f5597"/><rect x="72.90" y="29.0" width="1.50" height="3.799999999999997" fill="#2f5597"/><rect x="76.65" y="29.0" width="1.50" height="3.799999999999997" fill="#2f5597"/><rect x="80.40" y="29.0" width="1.50" height="3.799999999999997" fill="#2f5597"/><rect x="84.15" y="29.0" width="1.50" height="3.799999999999997" fill="#2f5597"/><rect x="87.90" y="29.0" width="1.50" height="3.799999999999997" fill="#2f5597"/>
<rect x="71.5" y="39.8" width="17.900000000000006" height="2.0500000000000043" fill="#8fc1e6"/><rect x="71.90" y="39.8" width="1.50" height="2.0500000000000043" fill="#2f5597"/><rect x="75.65" y="39.8" width="1.50" height="2.0500000000000043" fill="#2f5597"/><rect x="79.40" y="39.8" width="1.50" height="2.0500000000000043" fill="#2f5597"/><rect x="83.15" y="39.8" width="1.50" height="2.0500000000000043" fill="#2f5597"/><rect x="86.90" y="39.8" width="1.50" height="2.0500000000000043" fill="#2f5597"/>
<rect x="92.5" y="14.4" width="5.3" height="13.6" fill="#3a4c7a"/>
<path d="M25.6 23 L70 41.85 L25.6 41.85 Z" fill="#f4735c"/>
<circle cx="32.1" cy="31.9" r="2.4" fill="#6a78c2"/>
<path d="M123.7 28.5 L137 41.85 L123.7 41.85 Z" fill="#4d5f9a"/>
<rect x="91.9" y="28.1" width="31.9" height="13.75" fill="#fbc343"/>
<rect x="94.4" y="33.1" width="3.8" height="8.75" fill="#78b5d8"/>
<rect x="106.3" y="33.1" width="3.8" height="8.75" fill="#78b5d8"/>
<rect x="117.5" y="33.1" width="3.8" height="8.75" fill="#78b5d8"/>
<path d="M126.3 0 L161 0 L161 41.85 L137 41.85 L126.3 31 Z" fill="#b0aee3"/>
<rect x="161" y="0" width="15" height="41.85" fill="#6b7fc1"/>
<rect x="305.6" y="0" width="17" height="41.85" fill="#cfe6f7"/>
<rect x="322" y="0" width="45.3" height="41.85" fill="#fbc343"/>
<rect x="327" y="-2" width="40" height="5.1" fill="#8fc1e6"/><rect x="327.60" y="-2" width="1.70" height="5.1" fill="#2f5597"/><rect x="332.50" y="-2" width="1.70" height="5.1" fill="#2f5597"/><rect x="337.40" y="-2" width="1.70" height="5.1" fill="#2f5597"/><rect x="342.30" y="-2" width="1.70" height="5.1" fill="#2f5597"/><rect x="347.20" y="-2" width="1.70" height="5.1" fill="#2f5597"/><rect x="352.10" y="-2" width="1.70" height="5.1" fill="#2f5597"/><rect x="357.00" y="-2" width="1.70" height="5.1" fill="#2f5597"/><rect x="361.90" y="-2" width="1.70" height="5.1" fill="#2f5597"/><rect x="366.80" y="-2" width="0.20" height="5.1" fill="#2f5597"/>
<rect x="327" y="7.5" width="40" height="5.300000000000001" fill="#8fc1e6"/><rect x="327.60" y="7.5" width="1.70" height="5.300000000000001" fill="#2f5597"/><rect x="332.50" y="7.5" width="1.70" height="5.300000000000001" fill="#2f5597"/><rect x="337.40" y="7.5" width="1.70" height="5.300000000000001" fill="#2f5597"/><rect x="342.30" y="7.5" width="1.70" height="5.300000000000001" fill="#2f5597"/><rect x="347.20" y="7.5" width="1.70" height="5.300000000000001" fill="#2f5597"/><rect x="352.10" y="7.5" width="1.70" height="5.300000000000001" fill="#2f5597"/><rect x="357.00" y="7.5" width="1.70" height="5.300000000000001" fill="#2f5597"/><rect x="361.90" y="7.5" width="1.70" height="5.300000000000001" fill="#2f5597"/><rect x="366.80" y="7.5" width="0.20" height="5.300000000000001" fill="#2f5597"/>
<rect x="327" y="18.1" width="40" height="5.699999999999999" fill="#8fc1e6"/><rect x="327.60" y="18.1" width="1.70" height="5.699999999999999" fill="#2f5597"/><rect x="332.50" y="18.1" width="1.70" height="5.699999999999999" fill="#2f5597"/><rect x="337.40" y="18.1" width="1.70" height="5.699999999999999" fill="#2f5597"/><rect x="342.30" y="18.1" width="1.70" height="5.699999999999999" fill="#2f5597"/><rect x="347.20" y="18.1" width="1.70" height="5.699999999999999" fill="#2f5597"/><rect x="352.10" y="18.1" width="1.70" height="5.699999999999999" fill="#2f5597"/><rect x="357.00" y="18.1" width="1.70" height="5.699999999999999" fill="#2f5597"/><rect x="361.90" y="18.1" width="1.70" height="5.699999999999999" fill="#2f5597"/><rect x="366.80" y="18.1" width="0.20" height="5.699999999999999" fill="#2f5597"/>
<rect x="296" y="35" width="53" height="6.850000000000001" fill="url(#salm)"/>
<rect x="367.3" y="0" width="60" height="41.85" fill="#6b7fc1"/>
<path d="M388 41.85 L429.4 0 L448.1 0 L448.1 41.85 Z" fill="#d6df8e"/>
<path d="M377.8 41.85 L415.6 0 L429.4 0 L388 41.85 Z" fill="#4cb08a"/>
<path d="M388 41.85 L429.4 0 L432.6 0 L391.2 41.85 Z" fill="#f5e37a"/>
<rect x="448.1" y="0" width="4.2" height="41.85" fill="#4cb08a"/>
<rect x="452.3" y="26.5" width="131" height="15.350000000000001" fill="#6595be"/>
<path d="M537.8 41.85 L537.8 16.5 C538 15 541 15.2 543 15.2 C546.5 15.2 547.5 17 548 19 C548.5 22 550 23.6 553 23.8 L562 23.8 C566 24 568 29 570 31 C572 33 574 33.2 577 33.2 L583 33.2 L583 41.85 Z" fill="#f4735c"/>
<rect x="583" y="0" width="11.4" height="41.85" fill="#d9706a"/>
<rect x="594.4" y="0" width="13" height="41.85" fill="#36476f"/>
<rect x="607" y="0" width="21" height="41.85" fill="#4b5a9a"/>
<path d="M628 0 L730.6 0 L772.3 41.85 L628 41.85 Z" fill="url(#tealg)"/>
<path d="M594.4 0 L604 0 L604 6 L594.4 6 Z" fill="#36476f"/>
<path d="M604 6 C606 2 612 0 616 0 L662 0 C655 3 640 4.2 628 4.6 L604 6 Z" fill="#f8c6a3"/>
<path d="M730.6 0 L806.3 0 L806.3 41.85 L772.3 41.85 Z" fill="#d6df8e"/>
<path d="M720.6 0 L730.6 0 L772.3 41.85 L762.3 41.85 Z" fill="#4cb08a"/>
<path d="M743 0 L746.3 0 L787.3 41.85 L784 41.85 Z" fill="#f5e37a"/>
<path d="M750 0 L753.8 0 L753.8 3.2 Z" fill="#5a67b4"/>
<rect x="758.8" y="6.0" width="44.0" height="5.199999999999999" fill="#7ab5e0"/><rect x="766.60" y="6.0" width="2.00" height="5.199999999999999" fill="#6b78c4"/><rect x="775.10" y="6.0" width="2.00" height="5.199999999999999" fill="#6b78c4"/><rect x="783.60" y="6.0" width="2.00" height="5.199999999999999" fill="#6b78c4"/><rect x="792.10" y="6.0" width="2.00" height="5.199999999999999" fill="#6b78c4"/><rect x="800.60" y="6.0" width="2.00" height="5.199999999999999" fill="#6b78c4"/>
<rect x="758.8" y="6" width="1.2" height="5.2" fill="#6b78c4"/>
<path d="M988.8 0 L1030 0 L1030 41.85 L947 41.85 Z" fill="#7fbadb"/>
<path d="M955.6 0 L988.8 0 L955.6 31.9 Z" fill="#fbc343"/>
<path d="M955.6 2.8 L985.9 2.8 L983 5.6 L955.6 5.6 Z" fill="#fde26a"/>
<path d="M962 8 L970.6 8 L970.6 17.5 L962 25.7 Z" fill="#c9c9d8"/>
<rect x="955.6" y="0" width="1.1" height="31.9" fill="#6a6372"/>
<path d="M975.3 0 L976.3 0 L976.3 12 L975.3 13 Z" fill="#e3a92c"/>
<rect x="1028.1" y="0" width="10" height="17" fill="#6b78c4"/>
<rect x="1038.1" y="1.9" width="17.5" height="24" fill="#fbc343"/>
<rect x="1055.6" y="3" width="4" height="24" fill="#e3a92c"/>
<rect x="1039.2" y="3.8" width="1.9" height="4" fill="#9a7436"/>
<rect x="1039.2" y="9.4" width="1.9" height="4" fill="#9a7436"/>
<rect x="1043.9" y="3.8" width="1.9" height="4" fill="#9a7436"/>
<rect x="1043.9" y="9.4" width="1.9" height="4" fill="#9a7436"/>
<rect x="1048.3" y="3.8" width="1.9" height="4" fill="#9a7436"/>
<rect x="1048.3" y="9.4" width="1.9" height="4" fill="#9a7436"/>
<path d="M1053.1 20.6 L1070 30 L1070 41.85 L1053.1 41.85 Z" fill="#34478c"/>
<rect x="1023.1" y="16.3" width="30" height="25.55" fill="#6677c8"/>
<path d="M1023.1 16.3 L1053.1 16.3 L1070 26 L1070 30 L1053.1 20.6 L1023.1 20.6 Z" fill="#d0d4e8"/>
<rect x="1023.1" y="24.5" width="30" height="0.7" fill="#8b9be0"/>
<rect x="1023.1" y="28.5" width="30" height="0.7" fill="#8b9be0"/>
<rect x="1023.1" y="32.5" width="30" height="0.7" fill="#8b9be0"/>
<rect x="1023.1" y="36.5" width="30" height="0.7" fill="#8b9be0"/>
<rect x="1023.1" y="40.5" width="30" height="0.7" fill="#8b9be0"/>
<rect x="1031" y="20.6" width="0.7" height="21.25" fill="#8b9be0"/>
<rect x="1044.5" y="20.6" width="0.7" height="21.25" fill="#8b9be0"/>
<path d="M1053.1 24.0 L1070 32.5 L1070 33.6 L1053.1 25.2 Z" fill="#5a6fc2"/>
<path d="M1053.1 28.6 L1070 35.9 L1070 37.0 L1053.1 29.8 Z" fill="#5a6fc2"/>
<path d="M1053.1 33.2 L1070 39.3 L1070 40.4 L1053.1 34.4 Z" fill="#5a6fc2"/>
<path d="M1053.1 37.8 L1070 42.7 L1070 43.8 L1053.1 39.0 Z" fill="#5a6fc2"/>
<rect x="1076.3" y="0" width="25.6" height="41.85" fill="#3a4d78"/>
<rect x="1094.5" y="0" width="1.3" height="41.85" fill="#2d3c62"/>
<rect x="1069.4" y="20" width="5.6" height="21.85" fill="#c47a5a"/>
<rect x="1078.8" y="18.8" width="1.8" height="23.05" fill="#c9d1e0"/>
<path d="M1060 0 C1056 6 1055 12 1058 17 C1061 22 1070 22.5 1076 21.5 C1083 20.5 1085 14 1082.5 9 C1085 5 1083 2 1081 0 Z" fill="#6fc48b"/>
<path d="M1063.5 0 C1061 4 1059.8 8 1059.6 11" fill="none" stroke="#c7edd0" stroke-width="0.9"/>
<rect x="1101.9" y="0" width="45.9" height="41.85" fill="#d6e8fb"/>
<rect x="1101.9" y="0" width="0.9" height="41.85" fill="#7d86d0"/>
<rect x="1109.3" y="0" width="0.9" height="41.85" fill="#7d86d0"/>
<rect x="1116.6" y="0" width="0.9" height="41.85" fill="#7d86d0"/>
<rect x="1134.4" y="0" width="0.9" height="41.85" fill="#7d86d0"/>
<rect x="1140.5" y="0" width="0.9" height="41.85" fill="#7d86d0"/>
<rect x="1146.9" y="0" width="0.9" height="41.85" fill="#7d86d0"/>
<rect x="1101.9" y="0.9" width="45.9" height="0.9" fill="#7d86d0"/>
<rect x="1101.9" y="9.6" width="45.9" height="0.9" fill="#7d86d0"/>
<rect x="1101.9" y="18.2" width="45.9" height="0.9" fill="#7d86d0"/>
<rect x="1101.9" y="26.8" width="45.9" height="0.9" fill="#7d86d0"/>
<rect x="1101.9" y="35.4" width="45.9" height="0.9" fill="#7d86d0"/>
<rect x="1117.5" y="-3.10" width="16.9" height="5.1" fill="#6b78c4"/>
<rect x="1117.5" y="1.90" width="16.9" height="5.1" fill="#7ab5e0"/>
<rect x="1117.5" y="6.90" width="16.9" height="5.1" fill="#6b78c4"/>
<rect x="1117.5" y="11.90" width="16.9" height="5.1" fill="#7ab5e0"/>
<rect x="1117.5" y="16.90" width="16.9" height="5.1" fill="#6b78c4"/>
<rect x="1117.5" y="21.90" width="16.9" height="5.1" fill="#7ab5e0"/>
<rect x="1117.5" y="26.90" width="16.9" height="5.1" fill="#6b78c4"/>
<rect x="1117.5" y="31.90" width="16.9" height="5.1" fill="#7ab5e0"/>
<rect x="1117.5" y="36.90" width="16.9" height="5.1" fill="#6b78c4"/>
<rect x="1117.5" y="41.90" width="16.9" height="5.1" fill="#7ab5e0"/>
<path d="M1163.8 0 C1161 2 1157 5 1154.4 8 C1153.6 9.3 1155 10.2 1157 10.4 C1159.5 10.8 1160.3 11.6 1160 12.6 C1158.5 13.6 1156.6 14.8 1156.9 16.2 C1157.3 17.6 1160 17.6 1162 18.2 C1164 19 1164 21 1162 23 C1160 24.5 1156.3 24.6 1156.2 26.3 C1156.3 28 1159.5 28.6 1161 30.4 C1162.4 32.6 1161.6 35.5 1159.8 38 C1158.6 39.6 1157.8 40.6 1157.5 41.85 L1185 41.85 L1185 0 Z" fill="#f8c6a3"/>
<path d="M1163 22.6 C1164.5 21.5 1166 19.5 1166.8 18 C1168.2 18.6 1168.3 20.3 1167.3 21.4 C1166.2 22.6 1164.6 23.2 1163 22.6 Z" fill="#4a5fae"/>
<path d="M1140 0 C1142 6 1148 13.5 1156.6 17 C1152 12.5 1147.5 6 1146 0 Z" fill="#fff"/>
<path d="M1185 0 L1200 0 L1240 41.85 L1185 41.85 Z" fill="#fbcb55"/>
<path d="M1200 0 L1211.9 0 L1251.3 41.85 L1240 41.85 Z" fill="#78b5d8"/>
<path d="M1211.9 0 L1280 0 L1280 41.85 L1251.3 41.85 Z" fill="#f4735c"/>
<path d="M1222 0 L1223 0 L1262.6 41.85 L1261.6 41.85 Z" fill="#dc6450"/>
<path d="M1235.6 0 L1251.3 0 L1290.8 41.85 L1275 41.85 Z" fill="#4cb08a"/>
<circle cx="1268.8" cy="-0.5" r="5" fill="#f88f78"/>
<path d="M1275 0 L1280 0 L1280 5 Z" fill="#4cb08a"/>
<circle cx="1209.4" cy="36.3" r="11.4" fill="#cfe3f7" stroke="#fff" stroke-width="1.2"/>
<rect x="1208.9" y="25" width="1" height="16.85" fill="#fff"/>
<rect x="1198" y="35.8" width="22.8" height="1" fill="#fff"/>
<rect x="578.8" y="4.8" width="122.2" height="32.2" fill="#0c8b50"/>
<rect x="631.9" y="5.7" width="67.9" height="30.2" fill="#fff"/>
<text x="585.4" y="26.5" font-size="18" font-weight="bold" fill="#fff" stroke="#fff" stroke-width="0.9" textLength="7" lengthAdjust="spacingAndGlyphs">1</text>
<text x="596.2" y="26.4" font-size="14.2" font-weight="bold" fill="#fff" stroke="#fff" stroke-width="0.45" textLength="31.3" lengthAdjust="spacingAndGlyphs">First</text>
<text x="635.4" y="26.3" font-size="14.2" font-weight="bold" fill="#111" stroke="#111" stroke-width="0.3" textLength="58.4" lengthAdjust="spacingAndGlyphs">BanCorp</text>
</g></svg>
</body></html>
